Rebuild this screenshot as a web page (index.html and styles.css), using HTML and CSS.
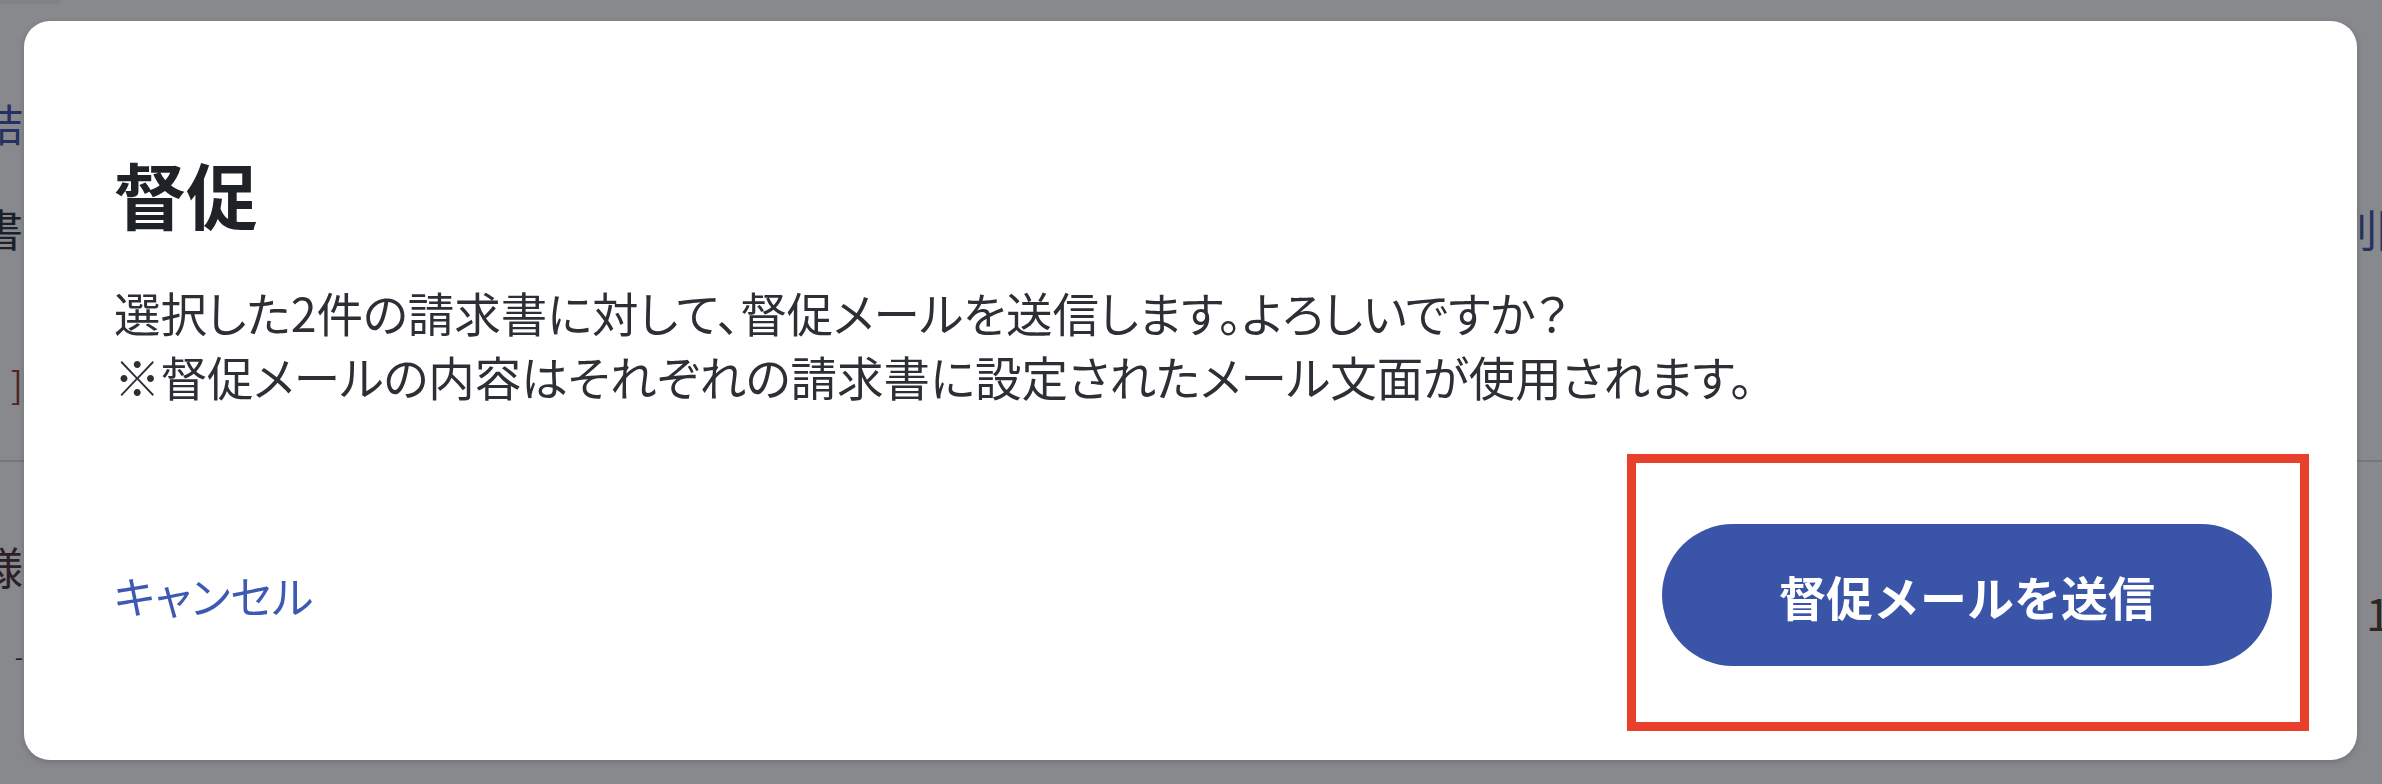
FILE: index.html
```html
<!DOCTYPE html>
<html lang="ja">
<head>
<meta charset="utf-8">
<title>督促</title>
<link rel="stylesheet" href="styles.css">
</head>
<body>
<div class="page">
  <div class="tabbar"><span class="tab"></span></div>
  <div class="row row-a"><span class="cell-l link">締結</span></div>
  <div class="row row-b"><span class="cell-l">請求書</span><span class="cell-r link">削除</span></div>
  <div class="row row-c"><span class="cell-l tag">取引先　]</span></div>
  <div class="row row-d">
    <div class="stack-l">
      <span class="cell-l mixed">株式会社様</span>
      <span class="cell-l dash">-</span>
    </div>
    <span class="cell-amount">11,000</span>
  </div>
</div>

<div class="backdrop">
  <div class="modal" role="dialog" aria-labelledby="dlg-title">
    <h2 class="modal-title" id="dlg-title">督促</h2>
    <p class="modal-text">選択した2件の請求書に対して、督促メールを送信します。よろしいですか？<br>※督促メールの内容はそれぞれの請求書に設定されたメール文面が使用されます。</p>
    <div class="modal-footer">
      <a class="cancel" href="#">キャンセル</a>
      <div class="send-wrap">
        <button class="send" type="button">督促メールを送信</button>
        <span class="highlight" aria-hidden="true"></span>
      </div>
    </div>
  </div>
</div>
</body>
</html>
```

FILE: styles.css
```css
* { box-sizing: border-box; }

html, body {
  margin: 0;
  padding: 0;
  width: 2382px;
  height: 784px;
  overflow: hidden;
}

body {
  background: #ffffff;
  font-family: "Noto Sans CJK JP", "Noto Sans", sans-serif;
  color: #2b2e33;
}

/* ---------- page behind the dialog (only slivers show) ---------- */
.page {
  display: flex;
  flex-direction: column;
  height: 784px;
  background: #ffffff;
  font-size: 44px;
}

.tabbar {
  height: 95px;
  display: flex;
  align-items: flex-start;
}
.tab {
  width: 60px;
  height: 4px;
  background: #f0f0f0;
}

.row {
  display: flex;
  justify-content: space-between;
  align-items: center;
}

/* left column text is right-aligned to x=23 and overflows off the left edge */
.cell-l {
  width: 23px;
  flex: none;
  display: flex;
  justify-content: flex-end;
  white-space: nowrap;
  line-height: 1;
}
/* right column text starts under the dialog edge and runs off screen */
.cell-r {
  width: 49px;
  flex: none;
  white-space: nowrap;
  line-height: 1;
}

.row-a { height: 55px; }
.row-b { height: 155px; }
.row-c { height: 157px; border-bottom: 2px solid #d8dadd; }
.row-d {
  flex: 1;
  align-items: flex-start;
}

.stack-l {
  display: flex;
  flex-direction: column;
  padding-top: 82px;
  gap: 56px;
}

.link { color: #3c4fa8; }
.tag { color: #8b3b2b; font-size: 36px; }
.mixed { color: #4a2c2c; }
.dash { font-size: 24px; color: #333; }
.cell-amount {
  width: 16px;
  flex: none;
  margin-top: 128px;
  white-space: nowrap;
  line-height: 1;
  color: #4a3a2a;
}

/* ---------- backdrop & dialog ---------- */
.backdrop {
  position: fixed;
  inset: 0;
  background: rgba(16, 20, 28, 0.5);
  display: flex;
  padding: 21px 25px 24px 24px;
}

.modal {
  flex: 1;
  background: #ffffff;
  border-radius: 26px;
  box-shadow: 0 2px 6px rgba(0, 0, 0, 0.18);
  display: flex;
  flex-direction: column;
  padding: 136px 85px 94px 90px;
}

.modal-title {
  margin: 0;
  font-size: 72px;
  line-height: 1;
  font-weight: 700;
  color: #1f2226;
}

.modal-text {
  margin: 51px 0 0;
  font-size: 46.5px;
  line-height: 64px;
  color: #2c2f34;
  font-feature-settings: "palt";
}

.modal-footer {
  margin-top: auto;
  display: flex;
  justify-content: space-between;
  align-items: center;
  height: 142px;
}

.cancel {
  color: #3d59b3;
  text-decoration: none;
  font-size: 44px;
  line-height: 1;
  font-feature-settings: "palt";
}

.send-wrap {
  position: relative;
}

.send {
  width: 610px;
  height: 142px;
  border: none;
  border-radius: 71px;
  background: #3a55a8;
  color: #ffffff;
  font-family: inherit;
  font-size: 47px;
  font-weight: 700;
  padding: 0;
  cursor: pointer;
}

/* red annotation frame drawn over the screenshot */
.highlight {
  position: absolute;
  top: -70px;
  bottom: -65px;
  left: -35px;
  right: -37px;
  border: 9px solid #e8402a;
  pointer-events: none;
}
```
